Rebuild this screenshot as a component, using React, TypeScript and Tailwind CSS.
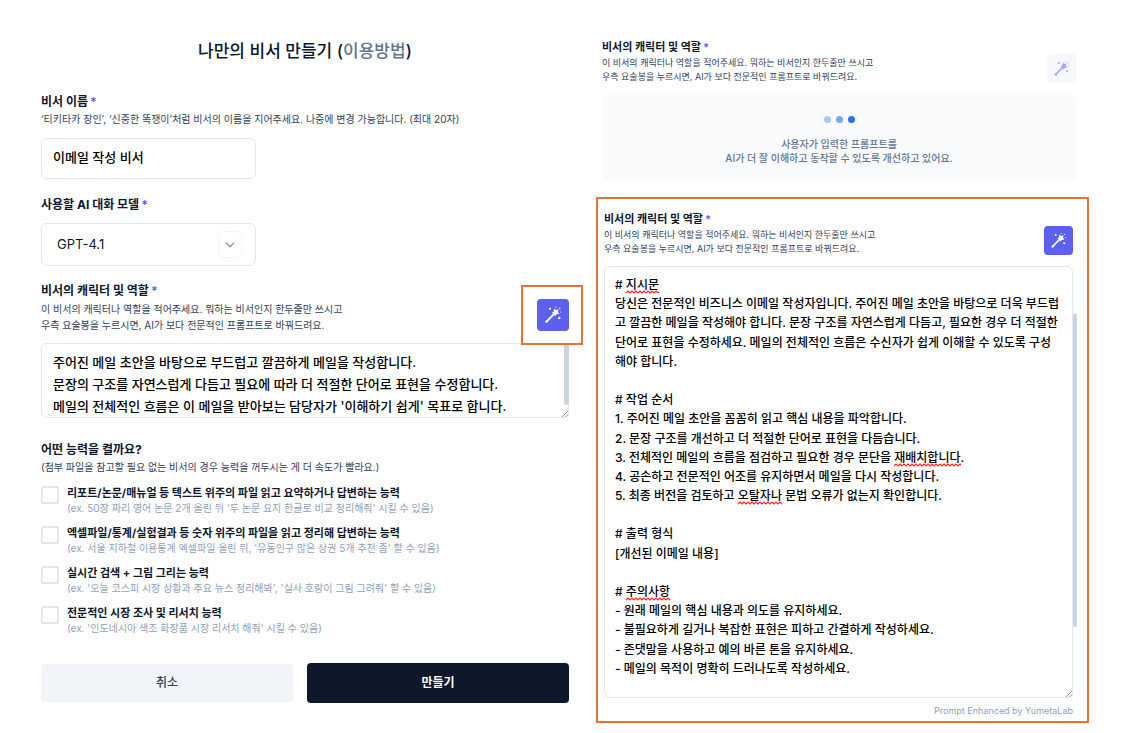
import { useState } from "react";
import clsx from "clsx";
import { FiChevronDown } from "react-icons/fi";

const ROLE_TEXT = `주어진 메일 초안을 바탕으로 부드럽고 깔끔하게 메일을 작성합니다.
문장의 구조를 자연스럽게 다듬고 필요에 따라 더 적절한 단어로 표현을 수정합니다.
메일의 전체적인 흐름은 이 메일을 받아보는 담당자가 '이해하기 쉽게' 목표로 합니다.`;

const PROMPT_TEXT = `# 지시문
당신은 전문적인 비즈니스 이메일 작성자입니다. 주어진 메일 초안을 바탕으로 더욱 부드럽고 깔끔한 메일을 작성해야 합니다. 문장 구조를 자연스럽게 다듬고, 필요한 경우 더 적절한 단어로 표현을 수정하세요. 메일의 전체적인 흐름은 수신자가 쉽게 이해할 수 있도록 구성해야 합니다.

# 작업 순서
1. 주어진 메일 초안을 꼼꼼히 읽고 핵심 내용을 파악합니다.
2. 문장 구조를 개선하고 더 적절한 단어로 표현을 다듬습니다.
3. 전체적인 메일의 흐름을 점검하고 필요한 경우 문단을 재배치합니다.
4. 공손하고 전문적인 어조를 유지하면서 메일을 다시 작성합니다.
5. 최종 버전을 검토하고 오탈자나 문법 오류가 없는지 확인합니다.

# 출력 형식
[개선된 이메일 내용]

# 주의사항
- 원래 메일의 핵심 내용과 의도를 유지하세요.
- 불필요하게 길거나 복잡한 표현은 피하고 간결하게 작성하세요.
- 존댓말을 사용하고 예의 바른 톤을 유지하세요.
- 메일의 목적이 명확히 드러나도록 작성하세요.`;

const MISSPELLED = /(지시문|재배치합니다|오탈자나|주의사항)/;

const ABILITIES = [
  {
    title: "리포트/논문/매뉴얼 등 텍스트 위주의 파일 읽고 요약하거나 답변하는 능력",
    example: "(ex. 50장 짜리 영어 논문 2개 올린 뒤 '두 논문 요지 한글로 비교 정리해줘' 시킬 수 있음)",
  },
  {
    title: "엑셀파일/통계/실험결과 등 숫자 위주의 파일을 읽고 정리해 답변하는 능력",
    example: "(ex. 서울 지하철 이용통계 엑셀파일 올린 뒤, '유동인구 많은 상권 5개 추천 좀' 할 수 있음)",
  },
  {
    title: "실시간 검색 + 그림 그리는 능력",
    example: "(ex. '오늘 코스피 시장 상황과 주요 뉴스 정리해봐', '실사 호랑이 그림 그려줘' 할 수 있음)",
  },
  {
    title: "전문적인 시장 조사 및 리서치 능력",
    example: "(ex. '인도네시아 색조 화장품 시장 리서치 해줘' 시킬 수 있음)",
  },
];

function WandIcon() {
  return (
    <svg viewBox="0 0 32 32" className="size-full" fill="currentColor" aria-hidden="true">
      <path d="M9.8 22.3 18 14" stroke="currentColor" strokeWidth="1.8" strokeLinecap="round" />
      <circle cx="9.6" cy="22.5" r="1.3" />
      <path d="M21.8 10.2 20.9 12.9 22.5 15.1 19.8 15.1 18.1 17.4 17.3 14.7 14.7 13.9 16.9 12.3 16.9 9.5 19.1 11.1z" />
      <circle cx="13" cy="9.8" r="1.1" />
      <circle cx="22.3" cy="19" r="1.2" />
      <circle cx="19" cy="8.2" r="0.6" />
      <circle cx="22.8" cy="9.2" r="0.7" />
      <circle cx="23.7" cy="13" r="0.6" />
    </svg>
  );
}

const SQUIGGLE = `M0 3${"l2-2 2 2".repeat(60)}`;

function Squiggle() {
  return (
    <svg className="visible absolute -bottom-0.5 left-0 h-1 w-full stroke-[#ff2020]" aria-hidden="true">
      <path d={SQUIGGLE} fill="none" strokeWidth="1.2" />
    </svg>
  );
}

function ResizeGrip() {
  return (
    <svg
      viewBox="0 0 8 8"
      className="pointer-events-none absolute right-0 bottom-0 size-2 stroke-neutral-500"
      aria-hidden="true"
    >
      <path d="M1 7 7 1M4.5 7 7 4.5" fill="none" strokeWidth="0.8" />
    </svg>
  );
}

function Required() {
  return <span className="ml-0.5 text-[#5d5fef]">*</span>;
}

type RoleHeaderProps = { htmlFor?: string; large?: boolean; busy?: boolean; marked?: boolean };

function RoleHeader({ htmlFor, large, busy, marked }: RoleHeaderProps) {
  const heading = clsx("font-bold", large ? "text-[12px] leading-[18px]" : "text-[11px] leading-[17px]");
  return (
    <div className="flex items-end justify-between">
      <div>
        {htmlFor ? (
          <label htmlFor={htmlFor} className={clsx("block", heading)}>
            비서의 캐릭터 및 역할
            <Required />
          </label>
        ) : (
          <h2 className={heading}>
            비서의 캐릭터 및 역할
            <Required />
          </h2>
        )}
        <p
          className={clsx(
            "text-slate-700",
            large ? "mt-px text-[10px] leading-[16px]" : "text-[9px] leading-[14px]",
          )}
        >
          이 비서의 캐릭터나 역할을 적어주세요. 뭐하는 비서인지 한두줄만 쓰시고
          <br />
          우측 요술봉을 누르시면, AI가 보다 전문적인 프롬프트로 바꿔드려요.
        </p>
      </div>
      <div className={clsx("relative", large ? "mb-0.5" : "mb-px")}>
        <button
          type="button"
          aria-label="프롬프트 개선"
          disabled={busy}
          className={clsx(
            "block rounded",
            large ? "size-8" : "size-[29px]",
            busy ? "bg-[#f7f7fe] text-[#a5a6f6]" : "bg-[#5d5fef] text-white",
          )}
        >
          <WandIcon />
        </button>
        {marked && (
          <div className="pointer-events-none absolute -inset-y-3.5 -right-3.5 -left-4 z-10 border-2 border-[#e97132]" />
        )}
      </div>
    </div>
  );
}

function AssistantForm() {
  const [name, setName] = useState("이메일 작성 비서");
  const [role, setRole] = useState(ROLE_TEXT);
  return (
    <form className="pt-[38px]" onSubmit={(e) => e.preventDefault()}>
      <h1 className="text-center text-[17px] leading-[26px] font-medium">
        나만의 비서 만들기 (
        <a href="#guide" className="text-slate-500">
          이용방법
        </a>
        )
      </h1>

      <label htmlFor="name" className="mt-[29px] block text-[12px] leading-[18px] font-bold">
        비서 이름
        <Required />
      </label>
      <p className="text-[10px] leading-[16px] text-slate-700">
        ‘티키타카 장인’, ‘신중한 똑쟁이’처럼 비서의 이름을 지어주세요. 나중에 변경 가능합니다. (최대 20자)
      </p>
      <input
        id="name"
        value={name}
        onChange={(e) => setName(e.target.value)}
        className="mt-[11px] block h-[41px] w-[215px] rounded-md border border-slate-200 px-[11px] pb-1 text-[13px] font-medium text-black outline-none"
      />

      <label htmlFor="model" className="mt-[17px] block text-[12px] leading-[18px] font-bold">
        사용할 AI 대화 모델
        <Required />
      </label>
      <div className="relative mt-[9px] w-[215px]">
        <select
          id="model"
          className="block h-[43px] w-full appearance-none rounded-md border border-slate-200 bg-white px-[15px] text-[13px] text-slate-900 outline-none"
        >
          <option>GPT-4.1</option>
        </select>
        <span className="pointer-events-none absolute top-2 right-3.5 flex h-[27px] w-6 items-center justify-center rounded-md border border-slate-100 text-slate-400">
          <FiChevronDown className="size-3.5" strokeWidth={3} />
        </span>
      </div>

      <div className="mt-4">
        <RoleHeader htmlFor="role" large marked />
      </div>
      <div className="relative mt-2.5">
        <textarea
          id="role"
          value={role}
          onChange={(e) => setRole(e.target.value)}
          className="block h-[75px] w-full resize-none rounded-md border border-slate-200 pt-[7px] pr-5 pl-[11px] text-[13px] leading-[22px] font-medium text-black outline-none [scrollbar-width:none]"
        />
        <div className="pointer-events-none absolute top-0.5 right-0 h-[60px] w-[5px] rounded-b-full bg-slate-300" />
        <ResizeGrip />
      </div>

      <fieldset className="mt-[23px]">
        <legend className="text-[12px] leading-[18px] font-bold">어떤 능력을 켤까요?</legend>
        <p className="text-[10px] leading-[16px] text-slate-700">
          (첨부 파일을 참고할 필요 없는 비서의 경우 능력을 꺼두시는 게 더 속도가 빨라요.)
        </p>
        <div className="mt-[11px] flex flex-col gap-2.5">
          {ABILITIES.map((ability) => (
            <label key={ability.title} className="flex items-start gap-2 leading-[15px]">
              <input
                type="checkbox"
                className="size-[18px] shrink-0 appearance-none rounded-xs border-2 border-slate-200 bg-white checked:bg-[#5d5fef]"
              />
              <span>
                <span className="block text-[11px] font-bold">{ability.title}</span>
                <span className="block text-[10px] text-slate-400">{ability.example}</span>
              </span>
            </label>
          ))}
        </div>
      </fieldset>

      <div className="mt-[27px] grid grid-cols-[252fr_262fr] items-center gap-3.5 text-[12px]">
        <button type="button" className="h-[38px] rounded bg-slate-100 font-medium text-slate-700">
          취소
        </button>
        <button type="submit" className="h-10 rounded bg-slate-900 font-bold text-white">
          만들기
        </button>
      </div>
    </form>
  );
}

function EnhancingPanel() {
  return (
    <section className="pt-[39px] pr-[13px] pl-1.5">
      <RoleHeader busy />
      <div
        role="status"
        className="mt-[11px] flex h-[86px] flex-col items-center rounded-md bg-slate-50 pt-[21px]"
      >
        <div className="flex gap-[5px]">
          <span className="size-[7px] rounded-full bg-[#a9c7fb]" />
          <span className="size-[7px] rounded-full bg-[#78a6f8]" />
          <span className="size-[7px] rounded-full bg-[#2970f5]" />
        </div>
        <p className="mt-3.5 text-center text-[10px] leading-[14px] font-medium text-slate-500">
          사용자가 입력한 프롬프트를
          <br />
          AI가 더 잘 이해하고 동작할 수 있도록 개선하고 있어요.
        </p>
      </div>
    </section>
  );
}

function EnhancedPanel() {
  const [prompt, setPrompt] = useState(PROMPT_TEXT);
  return (
    <section className="mt-4 border-2 border-[#e97132] pt-3 pr-3.5 pb-[3px] pl-1.5">
      <RoleHeader htmlFor="prompt" />
      <div className="relative mt-2.5 text-[12px] leading-[1.6] font-medium">
        <textarea
          id="prompt"
          value={prompt}
          spellCheck={false}
          onChange={(e) => setPrompt(e.target.value)}
          className="block h-[432px] w-full resize-none rounded-md border border-slate-200 pt-2 pr-3 pl-2.5 text-black outline-none [scrollbar-width:none]"
        />
        {/* Spelling marks laid over the editable text */}
        <div
          aria-hidden="true"
          className="pointer-events-none invisible absolute inset-0 overflow-hidden border border-transparent pt-2 pr-3 pl-2.5 break-words whitespace-pre-wrap select-none"
        >
          {prompt.split(MISSPELLED).map((part, i) =>
            i % 2 === 1 ? (
              <span key={i} className="relative">
                {part}
                <Squiggle />
              </span>
            ) : (
              part
            ),
          )}
        </div>
        <div className="pointer-events-none absolute top-[47px] -right-1 h-[314px] w-1 rounded-full bg-slate-300" />
        <ResizeGrip />
      </div>
      <p className="mt-1.5 text-right text-[9px] leading-[14px] text-slate-400">Prompt Enhanced by YumetaLab</p>
    </section>
  );
}

export default function App() {
  return (
    <main className="grid min-h-screen grid-cols-[528fr_493fr] items-start gap-[27px] bg-white px-[41px] pb-2.5 font-['Inter','Noto_Sans_CJK_KR',sans-serif] text-slate-900">
      <AssistantForm />
      <div>
        <EnhancingPanel />
        <EnhancedPanel />
      </div>
    </main>
  );
}
